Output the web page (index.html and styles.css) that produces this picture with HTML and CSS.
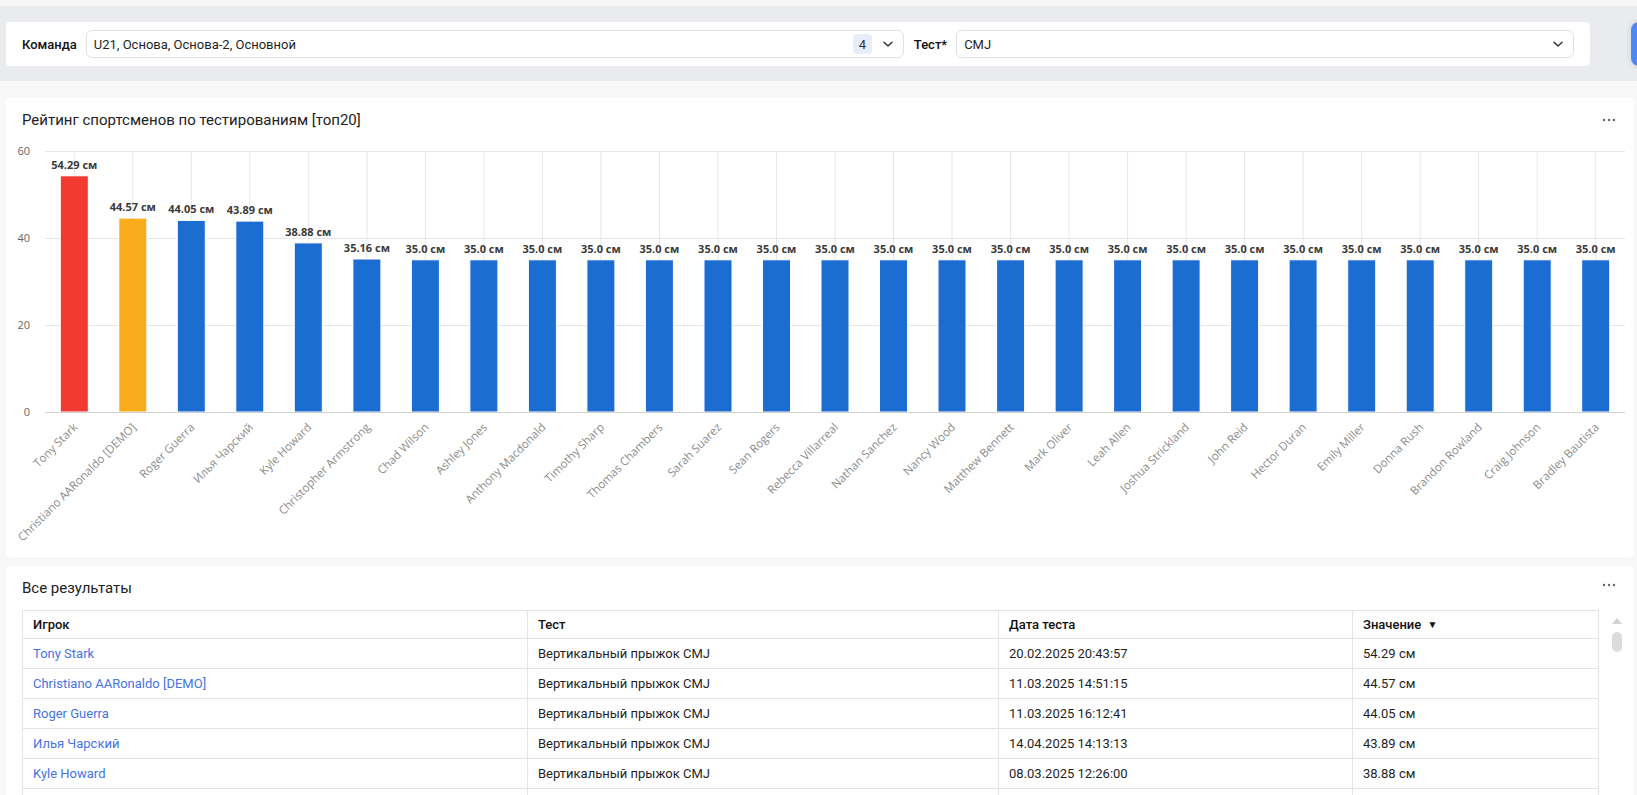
FILE: index.html
```html
<!DOCTYPE html>
<html lang="ru">
<head>
<meta charset="utf-8">
<title>Рейтинг спортсменов</title>
<link rel="stylesheet" href="styles.css">
</head>
<body>
<div class="top-strip"></div>
<div class="filter-band">
  <div class="filter-card">
    <span class="f-label">Команда</span>
    <div class="select select-team">
      <span class="select-value">U21, Основа, Основа-2, Основной</span>
      <span class="badge">4</span>
      <svg class="chev" viewBox="0 0 12 12" width="12" height="12"><path d="M2 4.2 L6 8 L10 4.2" fill="none" stroke="#333" stroke-width="1.5" stroke-linecap="round" stroke-linejoin="round"/></svg>
    </div>
    <span class="f-label f-label-test">Тест*</span>
    <div class="select select-test">
      <span class="select-value">CMJ</span>
      <svg class="chev" viewBox="0 0 12 12" width="12" height="12"><path d="M2 4.2 L6 8 L10 4.2" fill="none" stroke="#333" stroke-width="1.5" stroke-linecap="round" stroke-linejoin="round"/></svg>
    </div>
  </div>
  <div class="blue-btn"></div>
</div>

<div class="widget chart-widget">
  <div class="widget-head">
    <span class="widget-title">Рейтинг спортсменов по тестированиям [топ20]</span>
    <svg class="dots" viewBox="0 0 14 4" width="14" height="4"><circle cx="2" cy="2" r="1.2"/><circle cx="7" cy="2" r="1.2"/><circle cx="12" cy="2" r="1.2"/></svg>
  </div>
  <svg class="chart" width="1628" height="423" viewBox="0 0 1628 423">
    <g class="hgrid">
      <line x1="39" x2="1619" y1="17.5" y2="17.5"/>
      <line x1="39" x2="1619" y1="104.5" y2="104.5"/>
      <line x1="39" x2="1619" y1="191.5" y2="191.5"/>
    </g>
    <g class="ylab">
      <text x="24" y="21">60</text>
      <text x="24" y="108">40</text>
      <text x="24" y="195">20</text>
      <text x="24" y="282">0</text>
    </g>
    <g transform="translate(68.3 0)"><line class="vgrid" x1="0" x2="0" y1="17" y2="278"/><rect class="bar red" x="-14" y="41.8" width="28" height="236.2"/><text class="val" x="0" y="35">54.29 см</text><text class="cat" transform="translate(4 294) rotate(-45)">Tony Stark</text></g>
    <g transform="translate(126.8 0)"><line class="vgrid" x1="0" x2="0" y1="17" y2="278"/><rect class="bar orange" x="-14" y="84.1" width="28" height="193.9"/><text class="val" x="0" y="77">44.57 см</text><text class="cat" transform="translate(4 294) rotate(-45)">Christiano AARonaldo [DEMO]</text></g>
    <g transform="translate(185.3 0)"><line class="vgrid" x1="0" x2="0" y1="17" y2="278"/><rect class="bar blue" x="-14" y="86.4" width="28" height="191.6"/><text class="val" x="0" y="79">44.05 см</text><text class="cat" transform="translate(4 294) rotate(-45)">Roger Guerra</text></g>
    <g transform="translate(243.8 0)"><line class="vgrid" x1="0" x2="0" y1="17" y2="278"/><rect class="bar blue" x="-14" y="87.1" width="28" height="190.9"/><text class="val" x="0" y="80">43.89 см</text><text class="cat" transform="translate(4 294) rotate(-45)">Илья Чарский</text></g>
    <g transform="translate(302.3 0)"><line class="vgrid" x1="0" x2="0" y1="17" y2="278"/><rect class="bar blue" x="-14" y="108.9" width="28" height="169.1"/><text class="val" x="0" y="101.5">38.88 см</text><text class="cat" transform="translate(4 294) rotate(-45)">Kyle Howard</text></g>
    <g transform="translate(360.9 0)"><line class="vgrid" x1="0" x2="0" y1="17" y2="278"/><rect class="bar blue" x="-14" y="125.0" width="28" height="153.0"/><text class="val" x="0" y="118">35.16 см</text><text class="cat" transform="translate(4 294) rotate(-45)">Christopher Armstrong</text></g>
    <g transform="translate(419.4 0)"><line class="vgrid" x1="0" x2="0" y1="17" y2="278"/><rect class="bar blue" x="-14" y="125.8" width="28" height="152.2"/><text class="val" x="0" y="118.5">35.0 см</text><text class="cat" transform="translate(4 294) rotate(-45)">Chad Wilson</text></g>
    <g transform="translate(477.9 0)"><line class="vgrid" x1="0" x2="0" y1="17" y2="278"/><rect class="bar blue" x="-14" y="125.8" width="28" height="152.2"/><text class="val" x="0" y="118.5">35.0 см</text><text class="cat" transform="translate(4 294) rotate(-45)">Ashley Jones</text></g>
    <g transform="translate(536.4 0)"><line class="vgrid" x1="0" x2="0" y1="17" y2="278"/><rect class="bar blue" x="-14" y="125.8" width="28" height="152.2"/><text class="val" x="0" y="118.5">35.0 см</text><text class="cat" transform="translate(4 294) rotate(-45)">Anthony Macdonald</text></g>
    <g transform="translate(594.9 0)"><line class="vgrid" x1="0" x2="0" y1="17" y2="278"/><rect class="bar blue" x="-14" y="125.8" width="28" height="152.2"/><text class="val" x="0" y="118.5">35.0 см</text><text class="cat" transform="translate(4 294) rotate(-45)">Timothy Sharp</text></g>
    <g transform="translate(653.4 0)"><line class="vgrid" x1="0" x2="0" y1="17" y2="278"/><rect class="bar blue" x="-14" y="125.8" width="28" height="152.2"/><text class="val" x="0" y="118.5">35.0 см</text><text class="cat" transform="translate(4 294) rotate(-45)">Thomas Chambers</text></g>
    <g transform="translate(712.0 0)"><line class="vgrid" x1="0" x2="0" y1="17" y2="278"/><rect class="bar blue" x="-14" y="125.8" width="28" height="152.2"/><text class="val" x="0" y="118.5">35.0 см</text><text class="cat" transform="translate(4 294) rotate(-45)">Sarah Suarez</text></g>
    <g transform="translate(770.5 0)"><line class="vgrid" x1="0" x2="0" y1="17" y2="278"/><rect class="bar blue" x="-14" y="125.8" width="28" height="152.2"/><text class="val" x="0" y="118.5">35.0 см</text><text class="cat" transform="translate(4 294) rotate(-45)">Sean Rogers</text></g>
    <g transform="translate(829.0 0)"><line class="vgrid" x1="0" x2="0" y1="17" y2="278"/><rect class="bar blue" x="-14" y="125.8" width="28" height="152.2"/><text class="val" x="0" y="118.5">35.0 см</text><text class="cat" transform="translate(4 294) rotate(-45)">Rebecca Villarreal</text></g>
    <g transform="translate(887.5 0)"><line class="vgrid" x1="0" x2="0" y1="17" y2="278"/><rect class="bar blue" x="-14" y="125.8" width="28" height="152.2"/><text class="val" x="0" y="118.5">35.0 см</text><text class="cat" transform="translate(4 294) rotate(-45)">Nathan Sanchez</text></g>
    <g transform="translate(946.0 0)"><line class="vgrid" x1="0" x2="0" y1="17" y2="278"/><rect class="bar blue" x="-14" y="125.8" width="28" height="152.2"/><text class="val" x="0" y="118.5">35.0 см</text><text class="cat" transform="translate(4 294) rotate(-45)">Nancy Wood</text></g>
    <g transform="translate(1004.6 0)"><line class="vgrid" x1="0" x2="0" y1="17" y2="278"/><rect class="bar blue" x="-14" y="125.8" width="28" height="152.2"/><text class="val" x="0" y="118.5">35.0 см</text><text class="cat" transform="translate(4 294) rotate(-45)">Matthew Bennett</text></g>
    <g transform="translate(1063.1 0)"><line class="vgrid" x1="0" x2="0" y1="17" y2="278"/><rect class="bar blue" x="-14" y="125.8" width="28" height="152.2"/><text class="val" x="0" y="118.5">35.0 см</text><text class="cat" transform="translate(4 294) rotate(-45)">Mark Oliver</text></g>
    <g transform="translate(1121.6 0)"><line class="vgrid" x1="0" x2="0" y1="17" y2="278"/><rect class="bar blue" x="-14" y="125.8" width="28" height="152.2"/><text class="val" x="0" y="118.5">35.0 см</text><text class="cat" transform="translate(4 294) rotate(-45)">Leah Allen</text></g>
    <g transform="translate(1180.1 0)"><line class="vgrid" x1="0" x2="0" y1="17" y2="278"/><rect class="bar blue" x="-14" y="125.8" width="28" height="152.2"/><text class="val" x="0" y="118.5">35.0 см</text><text class="cat" transform="translate(4 294) rotate(-45)">Joshua Strickland</text></g>
    <g transform="translate(1238.6 0)"><line class="vgrid" x1="0" x2="0" y1="17" y2="278"/><rect class="bar blue" x="-14" y="125.8" width="28" height="152.2"/><text class="val" x="0" y="118.5">35.0 см</text><text class="cat" transform="translate(4 294) rotate(-45)">John Reid</text></g>
    <g transform="translate(1297.1 0)"><line class="vgrid" x1="0" x2="0" y1="17" y2="278"/><rect class="bar blue" x="-14" y="125.8" width="28" height="152.2"/><text class="val" x="0" y="118.5">35.0 см</text><text class="cat" transform="translate(4 294) rotate(-45)">Hector Duran</text></g>
    <g transform="translate(1355.7 0)"><line class="vgrid" x1="0" x2="0" y1="17" y2="278"/><rect class="bar blue" x="-14" y="125.8" width="28" height="152.2"/><text class="val" x="0" y="118.5">35.0 см</text><text class="cat" transform="translate(4 294) rotate(-45)">Emily Miller</text></g>
    <g transform="translate(1414.2 0)"><line class="vgrid" x1="0" x2="0" y1="17" y2="278"/><rect class="bar blue" x="-14" y="125.8" width="28" height="152.2"/><text class="val" x="0" y="118.5">35.0 см</text><text class="cat" transform="translate(4 294) rotate(-45)">Donna Rush</text></g>
    <g transform="translate(1472.7 0)"><line class="vgrid" x1="0" x2="0" y1="17" y2="278"/><rect class="bar blue" x="-14" y="125.8" width="28" height="152.2"/><text class="val" x="0" y="118.5">35.0 см</text><text class="cat" transform="translate(4 294) rotate(-45)">Brandon Rowland</text></g>
    <g transform="translate(1531.2 0)"><line class="vgrid" x1="0" x2="0" y1="17" y2="278"/><rect class="bar blue" x="-14" y="125.8" width="28" height="152.2"/><text class="val" x="0" y="118.5">35.0 см</text><text class="cat" transform="translate(4 294) rotate(-45)">Craig Johnson</text></g>
    <g transform="translate(1589.7 0)"><line class="vgrid" x1="0" x2="0" y1="17" y2="278"/><rect class="bar blue" x="-14" y="125.8" width="28" height="152.2"/><text class="val" x="0" y="118.5">35.0 см</text><text class="cat" transform="translate(4 294) rotate(-45)">Bradley Bautista</text></g>
    <line class="axis" x1="39" x2="1619" y1="278.5" y2="278.5"/>
  </svg>
</div>

<div class="widget table-widget">
  <div class="widget-head table-head">
    <span class="widget-title">Все результаты</span>
    <svg class="dots" viewBox="0 0 14 4" width="14" height="4"><circle cx="2" cy="2" r="1.2"/><circle cx="7" cy="2" r="1.2"/><circle cx="12" cy="2" r="1.2"/></svg>
  </div>
  <div class="table-wrap">
    <table class="results">
      <colgroup><col class="c-player"><col class="c-test"><col class="c-date"><col class="c-value"></colgroup>
      <thead>
        <tr><th>Игрок</th><th>Тест</th><th>Дата теста</th><th>Значение <span class="sort">&#9660;</span></th></tr>
      </thead>
      <tbody>
        <tr><td><a href="#">Tony Stark</a></td><td>Вертикальный прыжок CMJ</td><td>20.02.2025 20:43:57</td><td>54.29 см</td></tr>
        <tr><td><a href="#">Christiano AARonaldo [DEMO]</a></td><td>Вертикальный прыжок CMJ</td><td>11.03.2025 14:51:15</td><td>44.57 см</td></tr>
        <tr><td><a href="#">Roger Guerra</a></td><td>Вертикальный прыжок CMJ</td><td>11.03.2025 16:12:41</td><td>44.05 см</td></tr>
        <tr><td><a href="#">Илья Чарский</a></td><td>Вертикальный прыжок CMJ</td><td>14.04.2025 14:13:13</td><td>43.89 см</td></tr>
        <tr><td><a href="#">Kyle Howard</a></td><td>Вертикальный прыжок CMJ</td><td>08.03.2025 12:26:00</td><td>38.88 см</td></tr>
        <tr class="row-next"><td></td><td></td><td></td><td></td></tr>
      </tbody>
    </table>
    <div class="vscroll">
      <svg class="scroll-up" viewBox="0 0 10 6" width="10" height="6"><path d="M0 6 L5 0 L10 6 Z"/></svg>
      <div class="scroll-thumb"></div>
    </div>
  </div>
</div>
</body>
</html>
```

FILE: styles.css
```css
html, body {
  margin: 0;
  padding: 0;
  overflow: hidden;
}
body {
  background: #f8f8f8;
  font-family: Roboto, "Noto Sans", Arial, sans-serif;
  color: #1f1f1f;
  width: 1637px;
  height: 795px;
}

.top-strip {
  height: 6px;
  background: #f7f7f7;
}

.filter-band {
  display: flex;
  align-items: stretch;
  background: #e9ebee;
  padding: 16px 0 15px 6px;
  overflow: hidden;
}

.filter-card {
  flex: 0 0 auto;
  box-sizing: border-box;
  width: 1584px;
  height: 44px;
  background: #fff;
  border-radius: 4px;
  display: flex;
  align-items: center;
  padding: 0 16px;
}

.f-label {
  font-size: 13px;
  font-weight: 500;
  color: #111;
  margin-right: 9px;
  white-space: nowrap;
}
.f-label-test {
  margin-left: 10px;
}

.select {
  box-sizing: border-box;
  height: 28px;
  border: 1px solid #e2e2e2;
  border-radius: 6px;
  display: flex;
  align-items: center;
  padding: 0 9px 0 7px;
  font-size: 13px;
  color: #1f1f1f;
}
.select-team {
  flex: 0 0 818px;
}
.select-test {
  flex: 1 1 auto;
}
.select-value {
  flex: 1 1 auto;
  white-space: nowrap;
}
.badge {
  display: flex;
  align-items: center;
  justify-content: center;
  width: 19px;
  height: 20px;
  border-radius: 4px;
  background: #e6edfb;
  color: #333;
  font-size: 13px;
  margin-right: 10px;
}
.chev {
  display: block;
  flex: 0 0 12px;
}

.blue-btn {
  flex: 0 0 40px;
  height: 44px;
  margin-left: 41px;
  border-radius: 8px;
  background: #4f86f6;
  box-shadow: 0 0 6px rgba(0, 0, 0, 0.12);
}

.widget {
  background: #fff;
  border-radius: 4px;
  margin: 0 3px 0 6px;
}
.chart-widget {
  margin-top: 17px;
  height: 459px;
}
.table-widget {
  margin-top: 9px;
  height: 240px;
  overflow: hidden;
}

.widget-head {
  display: flex;
  align-items: center;
  justify-content: space-between;
  height: 36px;
  box-sizing: border-box;
  padding: 12px 18px 4px 16px;
}
.widget-title {
  font-size: 15px;
  line-height: 20px;
  color: #222;
}
.dots {
  display: block;
  fill: #666;
}

.table-head {
  height: 44px;
  padding: 12px 18px 12px 16px;
  align-items: flex-start;
}
.table-head .dots {
  margin-top: 5px;
}

.chart {
  display: block;
}
.chart .hgrid line,
.chart .vgrid {
  stroke: #e6e6e6;
  stroke-width: 1;
}
.chart .axis {
  stroke: #cfcfcf;
  stroke-width: 1;
}
.chart .ylab text {
  font-family: "Open Sans", "Noto Sans", sans-serif;
  font-size: 11px;
  fill: #666;
  text-anchor: end;
}
.chart .bar {
  stroke: #fff;
  stroke-width: 1;
}
.chart .red { fill: #f23a32; }
.chart .orange { fill: #f9ad1d; }
.chart .blue { fill: #1c6dd1; }
.chart .val {
  font-family: "Open Sans", "Noto Sans", sans-serif;
  font-size: 11px;
  font-weight: 700;
  fill: #3a3a3a;
  text-anchor: middle;
}
.chart .cat {
  font-family: "Open Sans", "Noto Sans", sans-serif;
  font-size: 11.5px;
  fill: #8c8c8c;
  text-anchor: end;
}

.table-wrap {
  display: flex;
  align-items: flex-start;
  padding-left: 16px;
}
.results {
  flex: 0 0 1576px;
  width: 1576px;
  border-collapse: collapse;
  table-layout: fixed;
  font-size: 13px;
  color: #1f1f1f;
}
.c-player { width: 505px; }
.c-test { width: 471px; }
.c-date { width: 354px; }
.c-value { width: 246px; }

.results th,
.results td {
  border: 1px solid #e4e4e4;
  padding: 0 10px;
  text-align: left;
  white-space: nowrap;
}
.results th {
  height: 27px;
  font-weight: 500;
  color: #111;
}
.results td {
  height: 29px;
}
.results a {
  color: #4474e0;
  text-decoration: none;
}
.sort {
  font-size: 10px;
  margin-left: 3px;
  position: relative;
  top: -1px;
}

.vscroll {
  flex: 0 0 36px;
  display: flex;
  flex-direction: column;
  align-items: center;
  padding-top: 8px;
}
.scroll-up {
  display: block;
  fill: #d4d4d4;
}
.scroll-thumb {
  margin-top: 8px;
  width: 10px;
  height: 20px;
  border-radius: 5px;
  background: #dcdcdc;
}
```
